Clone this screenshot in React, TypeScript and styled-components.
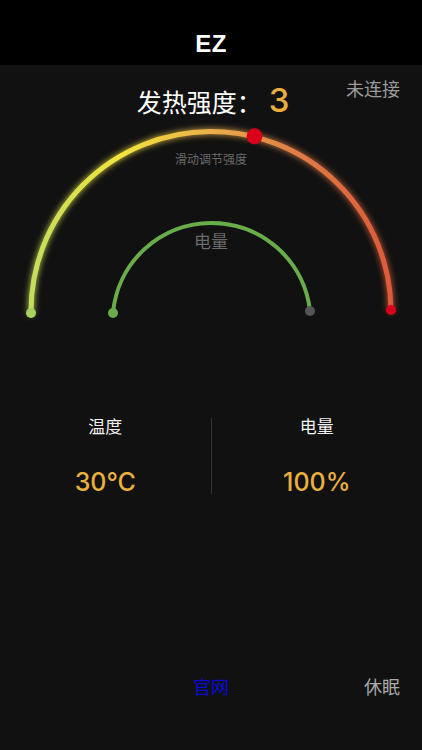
import React from 'react';
import styled, { createGlobalStyle } from 'styled-components';

const GlobalStyle = createGlobalStyle`
  html, body {
    margin: 0;
    padding: 0;
    background: #111111;
  }
  body {
    font-family: "Liberation Sans", "Noto Sans CJK SC", sans-serif;
  }
`;

const Screen = styled.div`
  width: 422px;
  height: 750px;
  display: flex;
  flex-direction: column;
  background: #111111;
  overflow: hidden;
`;

const NavBar = styled.div`
  height: 65px;
  background: #000000;
  display: flex;
  align-items: flex-end;
  justify-content: center;
  padding-bottom: 7px;
  box-sizing: border-box;
`;

const NavTitle = styled.div`
  color: #ffffff;
  font-size: 24px;
  font-weight: bold;
  letter-spacing: 0.5px;
`;

const TopRow = styled.div`
  display: grid;
  grid-template-columns: 1fr auto 1fr;
  padding: 10px 22px 0 22px;
  height: 53px;
  box-sizing: border-box;
`;

const Title = styled.div`
  grid-column: 2;
  display: flex;
  align-items: baseline;
  color: #ffffff;
  font-size: 25px;
  padding-top: 5px;
  padding-left: 4px;
`;

const Level = styled.span`
  color: #e9b03e;
  font-family: Inter, "Liberation Sans", sans-serif;
  font-weight: 500;
  font-size: 33px;
  margin-left: 7px;
`;

const Status = styled.div`
  grid-column: 3;
  justify-self: end;
  color: #9a9a9a;
  font-size: 18px;
`;

const GaugeBox = styled.div`
  position: relative;
  height: 212px;
`;

const GaugeLabel = styled.div<{ top: number; size: number }>`
  position: absolute;
  left: 0;
  right: 0;
  top: ${p => p.top}px;
  text-align: center;
  color: #6a6a6a;
  font-size: ${p => p.size}px;
`;

const Stats = styled.div`
  display: grid;
  grid-template-columns: 1fr 1px 1fr;
  margin-top: 83px;
  height: 84px;
`;

const StatCell = styled.div`
  display: flex;
  flex-direction: column;
  align-items: center;
  justify-content: space-between;
`;

const StatName = styled.div`
  color: #f2f2f2;
  font-size: 17px;
`;

const StatValue = styled.div`
  color: #e9b03e;
  font-family: Inter, "Liberation Sans", sans-serif;
  font-weight: 500;
  font-size: 25px;
`;

const Divider = styled.div`
  background: #333333;
  margin: 5px 0 3px;
`;

const BottomBar = styled.div`
  margin-top: auto;
  margin-bottom: 51px;
  display: grid;
  grid-template-columns: 1fr auto 1fr;
  padding: 0 22px;
  align-items: center;
`;

const SiteLink = styled.a`
  grid-column: 2;
  color: #0a0ad6;
  font-size: 18px;
  text-decoration: none;
`;

const SleepButton = styled.div`
  grid-column: 3;
  justify-self: end;
  color: #a8a8a8;
  font-size: 18px;
`;

const CX = 211;
const CY = 193;

function Gauge() {
  const R = 180;
  const r = 99;
  const angle = (deg: number) => (deg * Math.PI) / 180;
  const knobDeg = 76;
  const kx = CX + R * Math.cos(angle(knobDeg));
  const ky = CY - R * Math.sin(angle(knobDeg));
  return (
    <svg width="422" height="212" viewBox="0 0 422 212">
      <defs>
        <linearGradient id="heat" x1="31" y1="0" x2="391" y2="0" gradientUnits="userSpaceOnUse">
          <stop offset="0" stopColor="#c4dd5c" />
          <stop offset="0.25" stopColor="#f2e43e" />
          <stop offset="0.5" stopColor="#e9ae48" />
          <stop offset="0.75" stopColor="#df7a46" />
          <stop offset="1" stopColor="#dc5a3a" />
        </linearGradient>
        <filter id="glow" x="-20%" y="-20%" width="140%" height="140%">
          <feGaussianBlur stdDeviation="3" result="b" />
          <feMerge>
            <feMergeNode in="b" />
            <feMergeNode in="SourceGraphic" />
          </feMerge>
        </filter>
      </defs>
      <path
        d={`M ${CX - R} ${CY + 2} A ${R} ${R} 0 0 1 ${CX + R} ${CY - 1}`}
        fill="none"
        stroke="url(#heat)"
        strokeWidth="5"
        strokeLinecap="round"
        filter="url(#glow)"
      />
      <path
        d={`M ${CX - r + 1} ${CY + 2} A ${r} ${r} 0 0 1 ${CX + r} ${CY}`}
        fill="none"
        stroke="#69ad4b"
        strokeWidth="4"
      />
      <circle cx={CX - R} cy={CY + 2} r="5" fill="#a6d35e" />
      <circle cx={CX + R} cy={CY - 1} r="5" fill="#d8001a" />
      <circle cx={CX - r + 1} cy={CY + 2} r="5" fill="#69ad4b" />
      <circle cx={CX + r} cy={CY} r="5" fill="#555555" />
      <circle cx={kx} cy={ky} r="8" fill="#d8001a" />
    </svg>
  );
}

export default function App() {
  return (
    <>
      <GlobalStyle />
      <Screen>
        <NavBar>
          <NavTitle>EZ</NavTitle>
        </NavBar>
        <TopRow>
          <Title>
            发热强度：<Level>3</Level>
          </Title>
          <Status>未连接</Status>
        </TopRow>
        <GaugeBox>
          <Gauge />
          <GaugeLabel top={32} size={12}>滑动调节强度</GaugeLabel>
          <GaugeLabel top={110} size={17}>电量</GaugeLabel>
        </GaugeBox>
        <Stats>
          <StatCell>
            <StatName>温度</StatName>
            <StatValue>30°C</StatValue>
          </StatCell>
          <Divider />
          <StatCell>
            <StatName>电量</StatName>
            <StatValue>100%</StatValue>
          </StatCell>
        </Stats>
        <BottomBar>
          <SiteLink>官网</SiteLink>
          <SleepButton>休眠</SleepButton>
        </BottomBar>
      </Screen>
    </>
  );
}
